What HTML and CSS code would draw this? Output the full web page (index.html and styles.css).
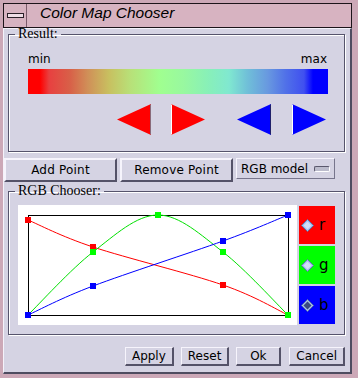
FILE: index.html
```html
<!DOCTYPE html>
<html lang="en">
<head>
<meta charset="UTF-8">
<title>Color Map Chooser</title>
<link rel="stylesheet" href="styles.css">
</head>
<body>

<div class="window">

 <div class="titlebar">
  <div class="menu-btn"><span class="menu-bar"></span></div>
  <div class="title">Color Map Chooser</div>
 </div>

 <div class="panel">

  <fieldset class="group result-group">
   <legend>Result:</legend>
   <div class="scale-labels"><span>min</span><span>max</span></div>
   <div class="colormap"></div>
   <div class="arrows">
    <svg class="arrow" width="34" height="31" viewBox="0 0 34 31"><polygon points="0,15.5 34,0 34,31" fill="#ff0000"/><line x1="33.5" y1="0.5" x2="33.5" y2="30.5" stroke="#8a6a7a"/></svg>
    <svg class="arrow arrow-red-right" width="34" height="31" viewBox="0 0 34 31"><polygon points="0,0 34,15.5 0,31" fill="#ff0000"/><line x1="0.5" y1="0.5" x2="0.5" y2="30.5" stroke="#ffffff"/></svg>
    <svg class="arrow arrow-blue-left" width="34" height="31" viewBox="0 0 34 31"><polygon points="0,15.5 34,0 34,31" fill="#0000ff"/><line x1="33.5" y1="0.5" x2="33.5" y2="30.5" stroke="#20206a"/></svg>
    <svg class="arrow arrow-blue-right" width="34" height="31" viewBox="0 0 34 31"><polygon points="0,0 34,15.5 0,31" fill="#0000ff"/><line x1="0.5" y1="0.5" x2="0.5" y2="30.5" stroke="#ffffff"/></svg>
   </div>
  </fieldset>

  <div class="tool-row">
   <button class="btn tool-btn">Add Point</button>
   <button class="btn tool-btn">Remove Point</button>
   <div class="model-toggle">RGB model<span class="toggle-ind"></span></div>
  </div>

  <fieldset class="group chooser-group">
   <legend>RGB Chooser:</legend>
   <div class="chooser">
    <svg class="plot" width="279" height="120" viewBox="18 205 279 120">
     <rect x="28.5" y="215.5" width="260" height="100" fill="none" stroke="#000"/>
     <path d="M28,220 C38.8,224.5 60.5,236.2 93,247 C125.5,257.8 190.5,273.7 223,285 C255.5,296.3 277.2,310 288,315" fill="none" stroke="#ff0000"/>
     <path d="M28,315 C38.8,304.5 71.3,268.7 93,252 C114.7,235.3 136.3,215 158,215 C179.7,215 201.3,235.3 223,252 C244.7,268.7 277.2,304.5 288,315" fill="none" stroke="#00e000"/>
     <path d="M28,315 C38.8,310.2 60.5,298.3 93,286 C125.5,273.7 190.5,252.8 223,241 C255.5,229.2 277.2,219.3 288,215" fill="none" stroke="#0000ff"/>
     <g fill="#ff0000">
      <rect x="25" y="217" width="6" height="6"/>
      <rect x="90" y="244" width="6" height="6"/>
      <rect x="220" y="282" width="6" height="6"/>
     </g>
     <g fill="#00ff00">
      <rect x="90" y="249" width="6" height="6"/>
      <rect x="155" y="212" width="6" height="6"/>
      <rect x="220" y="249" width="6" height="6"/>
      <rect x="285" y="312" width="6" height="6"/>
     </g>
     <g fill="#0000ff">
      <rect x="25" y="312" width="6" height="6"/>
      <rect x="90" y="283" width="6" height="6"/>
      <rect x="220" y="238" width="6" height="6"/>
      <rect x="285" y="212" width="6" height="6"/>
     </g>
    </svg>
    <div class="channels">
     <button class="channel ch-r"><svg class="diamond" width="13" height="13" viewBox="0 0 13 13"><polygon points="6.5,0.5 12.5,6.5 6.5,12.5 0.5,6.5" fill="#a6bdec" stroke="#5a76aa"/><polygon points="6.5,2.5 10.5,6.5 6.5,10.5 2.5,6.5" fill="#d0ddf8"/></svg>r</button>
     <button class="channel ch-g"><svg class="diamond" width="13" height="13" viewBox="0 0 13 13"><polygon points="6.5,0.5 12.5,6.5 6.5,12.5 0.5,6.5" fill="#a6bdec" stroke="#5a76aa"/><polygon points="6.5,2.5 10.5,6.5 6.5,10.5 2.5,6.5" fill="#d0ddf8"/></svg>g</button>
     <button class="channel ch-b"><svg class="diamond" width="13" height="13" viewBox="0 0 13 13"><polygon points="6.5,0.5 12.5,6.5 6.5,12.5 0.5,6.5" fill="#a6bdec" stroke="#5a76aa"/><polygon points="6.5,2.5 10.5,6.5 6.5,10.5 2.5,6.5" fill="#3a4a80"/></svg>b</button>
    </div>
   </div>
  </fieldset>

  <div class="dialog-buttons">
   <button class="btn small-btn">Apply</button>
   <button class="btn small-btn">Reset</button>
   <button class="btn small-btn">Ok</button>
   <button class="btn small-btn btn-last">Cancel</button>
  </div>

 </div>
</div>

</body>
</html>
```

FILE: styles.css
```css
body, html {
 width: 100%;
 height: 100%;
 margin: 0;
 overflow: hidden;
 background-color: #cca8b7;
 font-family: "DejaVu Sans", sans-serif;
 font-size: 12px;
}
.window {
 width: 349px;
 padding: 3px 0 0 3px;
}
.titlebar {
 height: 25px;
 box-sizing: border-box;
 border: 1px solid #1c141a;
 background-color: #d7b3c1;
 display: flex;
}
.menu-btn {
 width: 22px;
 border-right: 1px solid #7a5a6a;
 display: flex;
 align-items: center;
 justify-content: center;
}
.menu-bar {
 width: 15px;
 height: 3px;
 border: 1px solid #2a2028;
 background-color: #efdde6;
}
.title {
 padding-left: 13px;
 font-family: "Liberation Sans", Arial, sans-serif;
 font-style: italic;
 font-size: 15.5px;
 line-height: 18px;
}
.panel {
 height: 346px;
 box-sizing: border-box;
 border-top: 1px solid #f4f2fa;
 border-left: 1px solid #f4f2fa;
 border-right: 2px solid #4e4c60;
 border-bottom: 2px solid #4e4c60;
 background-color: #d5d3e3;
}

/* group boxes */
.group {
 margin: 0 5px 0 4px;
 padding: 0;
 min-width: 0;
 border: 1px solid #56546c;
 box-shadow: 1px 1px 0 #ffffff, inset 1px 1px 0 #ffffff;
}
.group legend {
 margin-left: 6px;
 padding: 0 3px;
 font-family: "Liberation Serif", "Times New Roman", serif;
 font-size: 14px;
 line-height: 10px;
}
.scale-labels {
 display: flex;
 justify-content: space-between;
 width: 299px;
 margin: 13px 0 0 19px;
 padding-right: 1px;
 line-height: 14px;
}
.colormap {
 width: 300px;
 height: 25px;
 margin: 3px 0 0 19px;
 background: linear-gradient(to right, #ff0000 0%, #ff0000 4%, #e84040 7%, #d86048 14%, #d09058 20%, #c8c060 27%, #b8e078 34%, #a0ff90 44%, #98f8a0 52%, #88f0b8 60%, #80e8d0 67%, #70c0d8 73%, #6898e0 80%, #5070e8 86%, #4050f0 92%, #0000ff 95%, #0000ff 100%);
}
.arrows {
 display: flex;
 margin: 10px 0 16px 108px;
}
.arrow {
 display: block;
}
.arrow-red-right {
 margin-left: 20px;
}
.arrow-blue-left {
 margin-left: 32px;
}
.arrow-blue-right {
 margin-left: 21px;
}

/* buttons */
.btn {
 padding: 0;
 font-family: "DejaVu Sans", sans-serif;
 font-size: 12px;
 color: #000;
 background-color: #d5d3e3;
 border-style: solid;
 border-color: #f6f4fc #545268 #545268 #f6f4fc;
}
.tool-row {
 display: flex;
 align-items: flex-start;
 margin-top: 6px;
}
.tool-btn {
 width: 113px;
 height: 24px;
 border-width: 2px;
 letter-spacing: 0.2px;
}
.tool-btn + .tool-btn {
 margin-left: 3px;
}
.model-toggle {
 display: flex;
 align-items: center;
 width: 99px;
 height: 21px;
 box-sizing: border-box;
 margin-left: 3px;
 padding-left: 4px;
 border: 1px solid;
 border-color: #f6f4fc #77758c #77758c #f6f4fc;
}
.toggle-ind {
 width: 16px;
 height: 6px;
 box-sizing: border-box;
 margin-left: 6px;
 border: 1px solid;
 border-color: #5a586c #ffffff #ffffff #5a586c;
 border-radius: 2px;
 background-color: #bcbccc;
}

/* rgb chooser */
.chooser-group {
 margin-top: 4px;
}
.chooser {
 display: flex;
 align-items: flex-start;
 gap: 2px;
 margin: 9px 0 9px 9px;
}
.plot {
 display: block;
 background-color: #ffffff;
}
.channels {
 display: flex;
 flex-direction: column;
 gap: 2px;
 margin-top: 1px;
}
.channel {
 display: flex;
 align-items: center;
 gap: 5px;
 width: 36px;
 height: 38px;
 padding: 0 0 0 2px;
 border: none;
 font-family: "DejaVu Sans", sans-serif;
 font-size: 15px;
 color: #000;
}
.diamond {
 display: block;
}
.ch-r {
 background-color: #ff0000;
}
.ch-g {
 background-color: #00ff00;
}
.ch-b {
 background-color: #0000ff;
}

.dialog-buttons {
 display: flex;
 justify-content: flex-end;
 margin-top: 12px;
 padding-right: 5px;
}
.small-btn {
 height: 19px;
 min-width: 45px;
 padding: 0 6px;
 margin-left: 7px;
 border-width: 1px 2px 2px 1px;
}
.btn-last {
 margin-left: 8px;
}
```
